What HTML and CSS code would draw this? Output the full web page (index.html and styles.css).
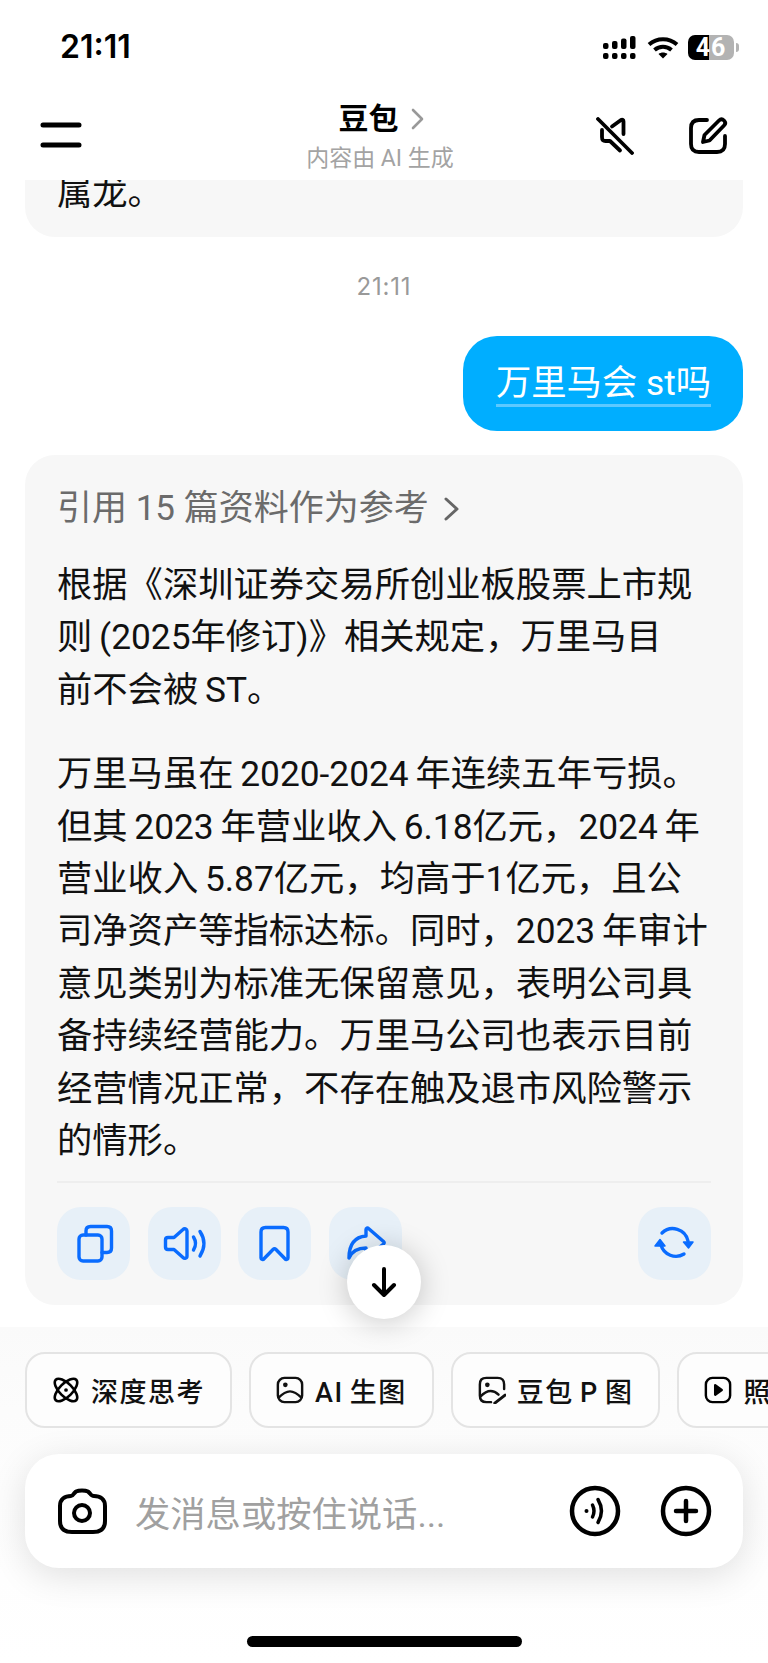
FILE: index.html
```html
<!DOCTYPE html>
<html lang="zh-CN">
<head>
    <meta charset="UTF-8">
    <meta name="viewport" content="width=device-width, initial-scale=1.0">
    <title>豆包</title>
    <link rel="stylesheet" href="styles.css">
</head>
<body>
    <div class="phone">
        <div class="status-bar">
            <span class="clock">21:11</span>
            <div class="status-icons">
                <svg class="signal" width="34" height="24" viewBox="0 0 34 24" fill="#000">
                    <rect x="0" y="7" width="5.5" height="6" rx="2"/>
                    <rect x="9" y="5" width="5.5" height="8" rx="2"/>
                    <rect x="18" y="2.5" width="5.5" height="10.5" rx="2"/>
                    <rect x="27" y="0" width="5.5" height="13" rx="2"/>
                    <rect x="0" y="17" width="5.5" height="6" rx="2"/>
                    <rect x="9" y="17" width="5.5" height="6" rx="2"/>
                    <rect x="18" y="17" width="5.5" height="6" rx="2"/>
                    <rect x="27" y="17" width="5.5" height="6" rx="2"/>
                </svg>
                <svg class="wifi" width="32" height="22" viewBox="0 0 32 22" fill="none" stroke="#000" stroke-width="4">
                    <path d="M2 7.5c8-7 20-7 28 0"/>
                    <path d="M7.5 13c5-4.300 12-4.300 17 0"/>
                    <path d="M16 21.500l-4.500-4.500c2.500-2 6.500-2 9 0z" fill="#000" stroke="none"/>
                </svg>
                <div class="battery"><span class="battery-level">46</span></div>
                <span class="battery-nub"></span>
            </div>
        </div>

        <header class="nav">
            <svg class="menu-icon" width="42" height="26" viewBox="0 0 42 26" fill="none" stroke="#000" stroke-width="5" stroke-linecap="round">
                <path d="M3 3h36M3 23h36"/>
            </svg>
            <div class="nav-title">
                <div class="bot-name">豆包
                    <svg width="13" height="22" viewBox="0 0 13 22" fill="none" stroke="#999" stroke-width="2.600" stroke-linecap="round" stroke-linejoin="round"><path d="M2 2l9 9-9 9"/></svg>
                </div>
                <div class="bot-sub">内容由 AI 生成</div>
            </div>
            <div class="nav-actions">
                <svg width="38" height="38" viewBox="0 0 38 38" fill="none" stroke="#000" stroke-width="3.800" stroke-linecap="round" stroke-linejoin="round">
                    <path d="M2 2l34 34"/>
                    <path d="M16 9.500l9-6.500c1.500-.8 2.500 0 2.500 1.500V17"/>
                    <path d="M6 13v7c0 3 1 4 3.500 4H14l10 9.500"/>
                </svg>
                <svg width="40" height="38" viewBox="0 0 40 38" fill="none" stroke="#000" stroke-width="3.800" stroke-linecap="round" stroke-linejoin="round">
                    <path d="M19 3h-8C5.500 3 3 5.500 3 11v16c0 5.500 2.500 8 8 8h18c5.500 0 8-2.500 8-8v-8"/>
                    <path d="M15 25l1.500-7L31 3.500c1.500-1.500 3.500-1.500 5 0s1.500 3.500 0 5L21.500 23.500z"/>
                </svg>
            </div>
        </header>

        <main class="chat">
            <div class="card prev-card"><p class="prev-text">属龙。</p></div>
            <div class="timestamp">21:11</div>
            <div class="user-row">
                <div class="bubble"><span class="bubble-text">万里马会 st吗</span></div>
            </div>
            <div class="card answer">
                <div class="refs">引用 15 篇资料作为参考
                    <svg width="18" height="28" viewBox="0 0 18 28" fill="none" stroke="#666" stroke-width="3" stroke-linecap="round" stroke-linejoin="round"><path d="M3 4l11 10L3 24"/></svg>
                </div>
                <p>根据《深圳证券交易所创业板股票上市规<br>则 (2025年修订)》相关规定，万里马目<br>前不会被 ST。</p>
                <p>万里马虽在 2020-2024 年连续五年亏损。<br>但其 2023 年营业收入 6.18亿元，2024 年<br>营业收入 5.87亿元，均高于1亿元，且公<br>司净资产等指标达标。同时，2023 年审计<br>意见类别为标准无保留意见，表明公司具<br>备持续经营能力。万里马公司也表示目前<br>经营情况正常，不存在触及退市风险警示<br>的情形。</p>
                <div class="actions">
                    <button class="act" type="button">
                        <svg viewBox="0 0 73 73"><rect x="22" y="28" width="23" height="26" rx="4"/><path d="M29 28v-4c0-3 1.500-4.500 4.500-4.500H50c3 0 4.500 1.500 4.500 4.500v17c0 3-1.500 4.500-4.500 4.500h-5"/></svg>
                    </button>
                    <button class="act" type="button">
                        <svg viewBox="0 0 73 73"><path d="M35 22.500c1.500-1.500 4-.8 4 1.500v25c0 2.500-2.500 3-4 1.500l-9-8h-6c-2 0-2.500-1-2.500-2.500v-7c0-1.500.5-2.500 2.500-2.500h6z"/><path d="M45.500 30c2.500 4 2.500 9 0 13"/><path d="M52 24.500c5 7.500 5 16.500 0 24.500"/></svg>
                    </button>
                    <button class="act" type="button">
                        <svg viewBox="0 0 73 73"><path d="M23 25c0-3 1.500-4.500 4.500-4.500h18c3 0 4.500 1.500 4.500 4.500v26c0 1.500-2 2-3 .8l-9-9.300c-1-1-2-1-3 0l-9 9.300c-1 1.200-3 .7-3-.8z"/></svg>
                    </button>
                    <button class="act" type="button">
                        <svg viewBox="0 0 73 73"><path d="M37 22.500c0-1.500 1.500-2 2.500-1l15 13c1 1 1 1.500 0 2.500l-15 12c-1 1-2.500.5-2.500-1v-7c-9 0-14 3-17 10 0-14 6-21 17-22z"/></svg>
                    </button>
                    <button class="act act-end" type="button">
                        <svg viewBox="0 0 73 73"><path d="M24 26a15.500 15.500 0 0 1 26 8"/><path d="M46 47a15.500 15.500 0 0 1-23-9"/><path class="solid" d="M45.500 35h9.500l-4.500 6zM27 39h-10l5-6.500z"/></svg>
                    </button>
                </div>
            </div>
        </main>

        <button class="scroll-down" type="button">
            <svg width="30" height="34" viewBox="0 0 30 34" fill="none" stroke="#000" stroke-width="4" stroke-linecap="round" stroke-linejoin="round"><path d="M15 4v26M5 20l10 10 10-10"/></svg>
        </button>

        <section class="composer">
            <div class="chips">
                <div class="chip">
                    <svg viewBox="0 0 30 30" fill="none" stroke="#000" stroke-width="2.800"><ellipse cx="15" cy="15" rx="7" ry="15.500" transform="rotate(-45 15 15)"/><ellipse cx="15" cy="15" rx="7" ry="15.500" transform="rotate(45 15 15)"/><circle cx="15" cy="15" r="2" fill="#000" stroke="none"/></svg>
                    深度思考
                </div>
                <div class="chip">
                    <svg viewBox="0 0 30 30" fill="none" stroke="#111" stroke-width="2.600" stroke-linejoin="round"><rect x="2" y="2" width="26" height="26" rx="7"/><circle cx="10" cy="9.500" r="2.500" fill="#111" stroke="none"/><path d="M2.500 23.500c4-4 8-7 12.500-7s8.500 3 12.500 7"/></svg>
                    AI 生图
                </div>
                <div class="chip">
                    <svg viewBox="0 0 30 30" fill="none" stroke="#111" stroke-width="2.600" stroke-linecap="round" stroke-linejoin="round"><path d="M14 28H9c-5 0-7-2-7-7V9c0-5 2-7 7-7h12c5 0 7 2 7 7v5"/><circle cx="10" cy="9.500" r="2.500" fill="#111" stroke="none"/><path d="M2.500 22c4-4 8-6 11-6 3.500 0 6 1.500 8.500 4"/><path d="M18 29l11-8.500" stroke-width="3.200"/></svg>
                    豆包 P 图
                </div>
                <div class="chip">
                    <svg viewBox="0 0 30 30" fill="none" stroke="#000" stroke-width="2.600"><rect x="2" y="2" width="26" height="26" rx="7"/><path d="M12 10l7 5-7 5z" fill="#000" stroke-linejoin="round"/></svg>
                    照片动起来
                </div>
            </div>
            <div class="input-box">
                <svg class="camera" width="50" height="46" viewBox="0 0 50 46" fill="none" stroke="#000" stroke-width="4" stroke-linejoin="round">
                    <path d="M17 5.500l2-2c3-1.500 9-1.500 12 0l2 2c1 1.500 2 2.500 4 2.500 6 0 11 3 11 10v15c0 8-5 11-12 11H15c-7 0-12-3-12-11V18c0-7 5-10 11-10 1.500 0 2-1 3-2.500z"/>
                    <circle cx="25" cy="25" r="8"/>
                </svg>
                <span class="placeholder">发消息或按住说话...</span>
                <svg class="voice" width="52" height="52" viewBox="0 0 52 52" fill="none" stroke="#000" stroke-width="4.500" stroke-linecap="round">
                    <circle cx="26" cy="26" r="23"/>
                    <circle cx="17.500" cy="26" r="2" fill="#000" stroke="none"/>
                    <path d="M23.500 20c2 4 2 8 0 12" stroke-width="3.500"/>
                    <path d="M29 14.500c4.500 7.500 4.500 15.500 0 23" stroke-width="3.500"/>
                </svg>
                <svg class="plus" width="52" height="52" viewBox="0 0 52 52" fill="none" stroke="#000" stroke-width="4.500" stroke-linecap="round">
                    <circle cx="26" cy="26" r="23"/>
                    <path d="M26 16v20M16 26h20"/>
                </svg>
            </div>
            <div class="home-bar"></div>
        </section>
    </div>
</body>
</html>
```

FILE: styles.css
```css
* {
    box-sizing: border-box;
    margin: 0;
    padding: 0;
}

html, body {
    background: #fff;
}

body {
    font-family: Roboto, "Noto Sans CJK SC", sans-serif;
    color: #111;
}

.phone {
    position: relative;
    width: 768px;
    height: 1663px;
    overflow: hidden;
    display: flex;
    flex-direction: column;
}

/* status bar */
.status-bar {
    height: 80px;
    flex: none;
    display: flex;
    justify-content: space-between;
    padding: 30px 29px 0 60px;
}

.clock {
    font-family: Inter, sans-serif;
    font-size: 32px;
    line-height: 34px;
    font-weight: 600;
    color: #000;
}

.status-icons {
    display: flex;
    align-items: flex-start;
    padding-top: 5px;
}

.signal {
    margin-top: 1px;
    margin-right: 10px;
}

.wifi {
    margin-top: 2px;
    margin-right: 9px;
}

.battery {
    width: 46px;
    height: 25px;
    border-radius: 7px;
    background: linear-gradient(90deg, #000 0, #000 46%, #b3b3b3 46%);
    text-align: center;
}

.battery-level {
    font-size: 25px;
    line-height: 25px;
    font-weight: 700;
    letter-spacing: 1px;
    color: #fff;
    display: block;
}

.battery-nub {
    width: 3px;
    height: 9px;
    margin: 8px 0 0 2px;
    background: #b3b3b3;
    border-radius: 0 3px 3px 0;
}

/* nav */
.nav {
    height: 100px;
    flex: none;
    display: flex;
    align-items: flex-start;
    justify-content: space-between;
    padding: 0 40px;
    position: relative;
}

.menu-icon {
    margin-top: 42px;
}

.nav-title {
    position: absolute;
    left: 0;
    right: 0;
    top: 21px;
    text-align: center;
}

.bot-name {
    font-size: 30px;
    line-height: 36px;
    font-weight: 700;
    color: #000;
    display: flex;
    justify-content: center;
    align-items: center;
    gap: 12px;
    padding-right: 6px;
}

.bot-sub {
    font-size: 23px;
    line-height: 30px;
    color: #a3a3a3;
    margin-top: 7px;
    padding-right: 8px;
}

.nav-actions {
    display: flex;
    gap: 54px;
    margin-top: 37px;
}

/* messages */
.chat {
    flex: none;
    height: 1147px;
    padding: 0 25px;
}

.card {
    background: #f7f7f7;
    border-radius: 30px;
}

.prev-card {
    height: 57px;
    border-radius: 0 0 30px 30px;
    padding: 0 32px;
    overflow: hidden;
}

.prev-text {
    font-size: 35.300px;
    line-height: 52px;
    margin-top: -13px;
}

.timestamp {
    font-family: Inter, sans-serif;
    text-align: center;
    font-size: 24px;
    letter-spacing: 0.8px;
    line-height: 30px;
    color: #999;
    margin-top: 35px;
}

.user-row {
    display: flex;
    justify-content: flex-end;
    margin-top: 34px;
}

.bubble {
    background: #00aeff;
    border-radius: 34px;
    padding: 26px 32px 0 33px;
    height: 95px;
    color: #fff;
    font-size: 35.300px;
}

.bubble-text {
    display: block;
    line-height: 42px;
    border-bottom: 3px solid #5cc9ff;
}

.answer {
    margin-top: 24px;
    height: 850px;
    padding: 34px 32px 0;
}

.refs {
    font-size: 35px;
    line-height: 40px;
    color: #6b6b6b;
    display: flex;
    align-items: center;
    gap: 14px;
    margin-bottom: 30px;
}

.answer p {
    font-size: 35.300px;
    word-spacing: -2px;
    line-height: 52.400px;
    white-space: nowrap;
    color: #111;
    margin-bottom: 32px;
}

.actions {
    border-top: 2px solid #eeeeee;
    margin-top: -18px;
    padding-top: 24px;
    display: flex;
    gap: 17.500px;
}

.act {
    width: 73px;
    height: 73px;
    border: none;
    border-radius: 24px;
    background: #e7f0f8;
}

.act svg {
    display: block;
    width: 73px;
    height: 73px;
    fill: none;
    stroke: #0a6cff;
    stroke-width: 3.400;
    stroke-linecap: round;
    stroke-linejoin: round;
}

.act svg .solid {
    fill: #0a6cff;
    stroke-width: 1.500;
}

.act-end {
    margin-left: auto;
}

.scroll-down {
    position: absolute;
    left: 347px;
    top: 1245px;
    width: 74px;
    height: 74px;
    border: none;
    border-radius: 50%;
    background: #fff;
    box-shadow: 0 3px 30px rgba(0,0,0,0.22);
    display: flex;
    align-items: center;
    justify-content: center;
    z-index: 2;
}

/* bottom composer */
.composer {
    flex: 1;
    background: linear-gradient(180deg, #fafafa 0, #fcfcfc 25%, #ffffff 100%);
    padding: 25px 0 0 25px;
    position: relative;
}

.chips {
    display: flex;
    gap: 17px;
    height: 76px;
    overflow: hidden;
    margin-right: -25px;
}

.chip {
    flex: none;
    height: 76px;
    padding: 0 25px;
    display: flex;
    align-items: center;
    gap: 11px;
    border: 2px solid #e4e4e4;
    border-radius: 20px;
    background: #fdfdfd;
    font-size: 27px;
    font-weight: 500;
    letter-spacing: 1.500px;
    word-spacing: -2px;
    color: #111;
}

.chip svg {
    width: 28px;
    height: 28px;
    flex: none;
}

.input-box {
    width: 718px;
    height: 114px;
    margin-top: 26px;
    background: #fff;
    border-radius: 34px;
    box-shadow: 0 8px 36px rgba(0,0,0,0.12);
    display: flex;
    align-items: center;
    padding: 0 31px 0 32px;
}

.camera {
    flex: none;
}

.placeholder {
    flex: 1;
    margin-left: 28px;
    font-size: 35.300px;
    color: #a0a0a0;
}

.plus {
    margin-left: 39px;
}

.home-bar {
    position: absolute;
    left: 247px;
    bottom: 16px;
    width: 275px;
    height: 11px;
    border-radius: 6px;
    background: #000;
}
```
